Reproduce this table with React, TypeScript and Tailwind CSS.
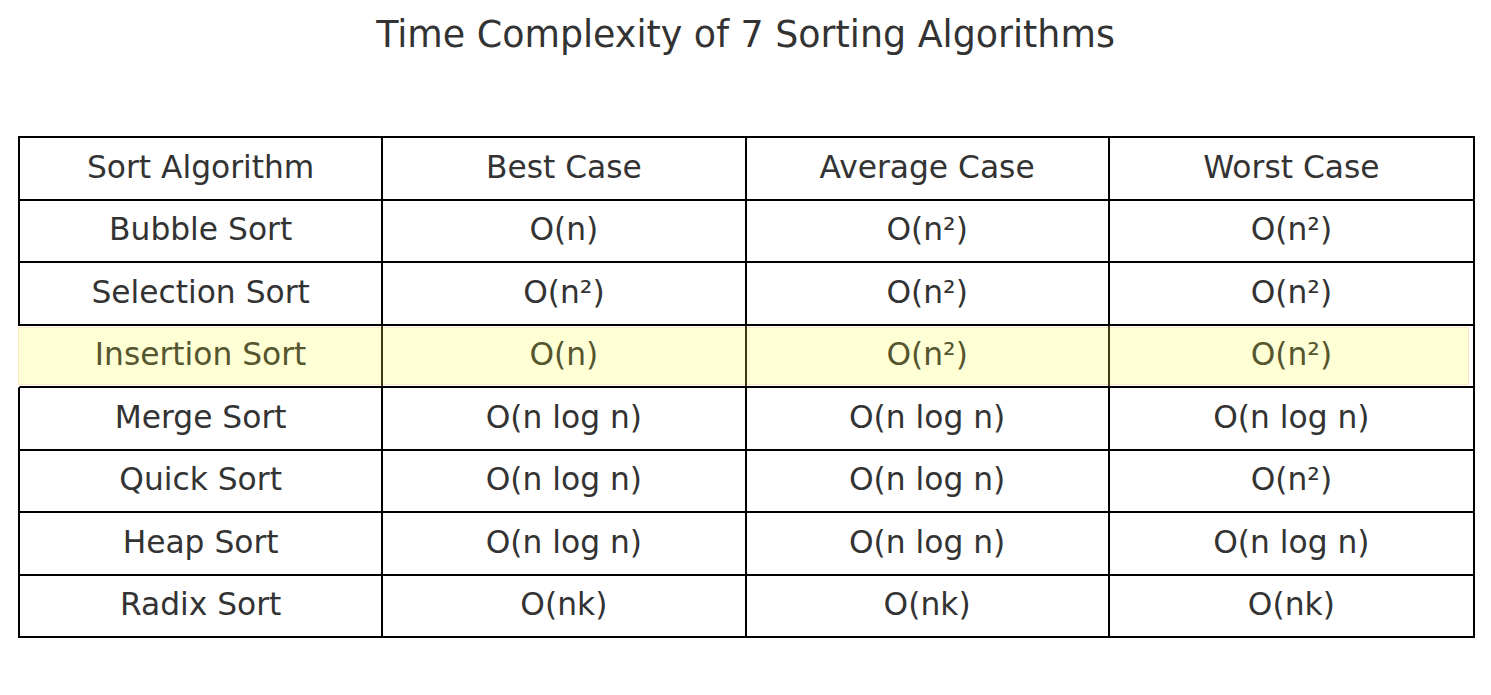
const rows = [
  ["Bubble Sort", "O(n)", "O(n²)", "O(n²)"],
  ["Selection Sort", "O(n²)", "O(n²)", "O(n²)"],
  ["Insertion Sort", "O(n)", "O(n²)", "O(n²)"],
  ["Merge Sort", "O(n log n)", "O(n log n)", "O(n log n)"],
  ["Quick Sort", "O(n log n)", "O(n log n)", "O(n²)"],
  ["Heap Sort", "O(n log n)", "O(n log n)", "O(n log n)"],
  ["Radix Sort", "O(nk)", "O(nk)", "O(nk)"],
];

const header = ["Sort Algorithm", "Best Case", "Average Case", "Worst Case"];

function Row({ cells, highlight }: { cells: string[]; highlight?: boolean }) {
  return (
    <div
      className={
        "relative grid h-[62.5px] grid-cols-4 border-r-2 border-b-2 border-black " +
        (highlight ? "border-l-2 border-l-transparent" : "border-l-2")
      }
    >
      {highlight && (
        // highlight band drawn over the row
        <div className="pointer-events-none absolute top-[1px] bottom-[1px] left-[-2px] right-[4px] border border-[#ffe6c2] bg-[#ffffd6]" />
      )}
      {cells.map((c, i) => (
        <div
          key={i}
          className={
            "relative flex items-center justify-center pb-[2px] " +
            (i < 3
              ? highlight
                ? "border-r-2 border-[#3a3a14]"
                : "border-r-2 border-black"
              : "") +
            (highlight ? " text-[#55552e]" : " text-[#333333]")
          }
        >
          {c}
        </div>
      ))}
    </div>
  );
}

export default function App() {
  return (
    <div
      className="h-[695px] w-[1491px] bg-white text-[31.3px]"
      style={{ fontFamily: '"DejaVu Sans", sans-serif' }}
    >
      <div className="flex h-[136px] justify-center pt-[13px] text-[36.4px] leading-[44px] text-[#333333]">
        Time Complexity of 7 Sorting Algorithms
      </div>
      <div className="ml-[18px] w-[1457px] border-t-2 border-black">
        <Row cells={header} />
        {rows.map((r, i) => (
          <Row key={i} cells={r} highlight={i === 2} />
        ))}
      </div>
    </div>
  );
}
